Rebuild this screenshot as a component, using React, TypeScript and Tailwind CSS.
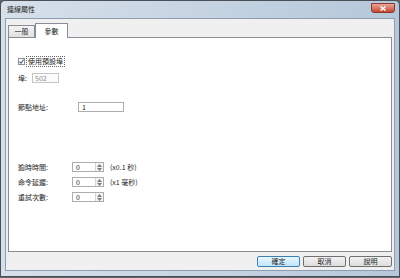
import React from "react";

const font = { fontFamily: '"Noto Sans CJK TC", "Liberation Sans", sans-serif' };

function Spin({ value }: { value: string }) {
  return (
    <div className="flex h-[10px] w-[32px] border border-[#abadb3] bg-white">
      <div className="flex flex-1 items-center pl-[3px] text-[7px] leading-none text-[#222]">{value}</div>
      <div className="flex w-[8px] flex-col border-l border-[#d5d5d5] bg-[#f4f4f4]">
        <div className="flex flex-1 items-center justify-center">
          <svg width="5" height="3" viewBox="0 0 5 3">
            <path d="M0 3 L2.5 0 L5 3 Z" fill="#7a7a7a" />
          </svg>
        </div>
        <div className="flex flex-1 items-center justify-center">
          <svg width="5" height="3" viewBox="0 0 5 3">
            <path d="M0 0 L2.5 3 L5 0 Z" fill="#7a7a7a" />
          </svg>
        </div>
      </div>
    </div>
  );
}

function Btn({ label, focus }: { label: string; focus?: boolean }) {
  return (
    <div
      className={
        "flex h-[11px] w-[43px] items-center justify-center rounded-[2px] border text-[7px] leading-none text-[#222] " +
        (focus
          ? "border-[#3c7fb1] bg-gradient-to-b from-[#eaf6fd] to-[#bee6fd]"
          : "border-[#707070] bg-gradient-to-b from-[#f2f2f2] to-[#dddddd]")
      }
    >
      {label}
    </div>
  );
}

export default function App() {
  return (
    <div className="h-[278px] w-[400px] overflow-hidden bg-[#5d636a]" style={font}>
      <div className="flex h-[277px] w-[400px] flex-col rounded-t-[5px] border border-[#4a5058] bg-gradient-to-r from-[#d6e0ea] via-[#c6d4e2] to-[#b5c7da]">
        <div className="flex h-[17px] items-center justify-between pl-[6px] pr-[4px]">
          <span className="text-[7px] leading-none text-[#222]">連線屬性</span>
          <div className="-mt-[3px] flex h-[10px] w-[24px] items-center justify-center rounded-b-[3px] border border-[#8a3a30] bg-gradient-to-b from-[#e9a597] to-[#c7432f]">
            <svg width="6" height="5" viewBox="0 0 6 5">
              <path d="M0.5 0.5 L5.5 4.5 M5.5 0.5 L0.5 4.5" stroke="white" strokeWidth="1.4" />
            </svg>
          </div>
        </div>
        <div className="mx-[4px] mb-[5px] flex flex-1 flex-col border border-[#8e9eb0] bg-[#f0f0f0] px-[2px]">
          <div className="mt-[3px] flex h-[15px] items-end">
            <div className="flex h-[12px] w-[27px] items-center justify-center border border-b-0 border-[#898c95] bg-gradient-to-b from-[#f4f4f4] to-[#e0e0e0] text-[7px] leading-none text-[#222]">
              一般
            </div>
            <div className="relative -mb-px flex h-[15px] w-[33px] items-center justify-center border border-b-0 border-[#898c95] bg-white text-[7px] leading-none text-[#222]">
              參數
            </div>
          </div>
          <div className="flex h-[215px] flex-col border border-[#898c95] bg-white pl-[9px] text-[7px] leading-none text-[#222]">
            <div className="mt-[18px] flex items-center">
              <div className="flex h-[7px] w-[7px] items-center justify-center border border-[#8f8f8f] bg-white">
                <svg width="5" height="5" viewBox="0 0 5 5">
                  <path d="M0.5 2.6 L2 4.2 L4.6 0.6" stroke="#4a5f8c" strokeWidth="1.1" fill="none" />
                </svg>
              </div>
              <span className="ml-[1px] border border-dotted border-[#666] px-[1px] py-[1px]">使用預設埠</span>
            </div>
            <div className="mt-[6px] flex items-center">
              <span className="w-[14px]">埠:</span>
              <div className="flex h-[10px] w-[27px] items-center border border-[#c5c5c5] bg-[#fbfbfb] pl-[2px] text-[#8a8a8a]">502</div>
            </div>
            <div className="mt-[19px] flex items-center">
              <span className="w-[60px]">節點地址:</span>
              <div className="flex h-[10px] w-[46px] items-center border border-[#abadb3] bg-white pl-[3px]">1</div>
            </div>
            <div className="mt-[50px] flex items-center">
              <span className="w-[54px]">逾時時間:</span>
              <Spin value="0" />
              <span className="ml-[6px]">(x0.1 秒)</span>
            </div>
            <div className="mt-[5px] flex items-center">
              <span className="w-[54px]">命令延遲:</span>
              <Spin value="0" />
              <span className="ml-[6px]">(x1 毫秒)</span>
            </div>
            <div className="mt-[5px] flex items-center">
              <span className="w-[54px]">重試次數:</span>
              <Spin value="0" />
            </div>
          </div>
          <div className="mt-[4px] flex justify-end gap-[3px] pr-[0px]">
            <Btn label="確定" focus />
            <Btn label="取消" />
            <Btn label="說明" />
          </div>
        </div>
      </div>
    </div>
  );
}
